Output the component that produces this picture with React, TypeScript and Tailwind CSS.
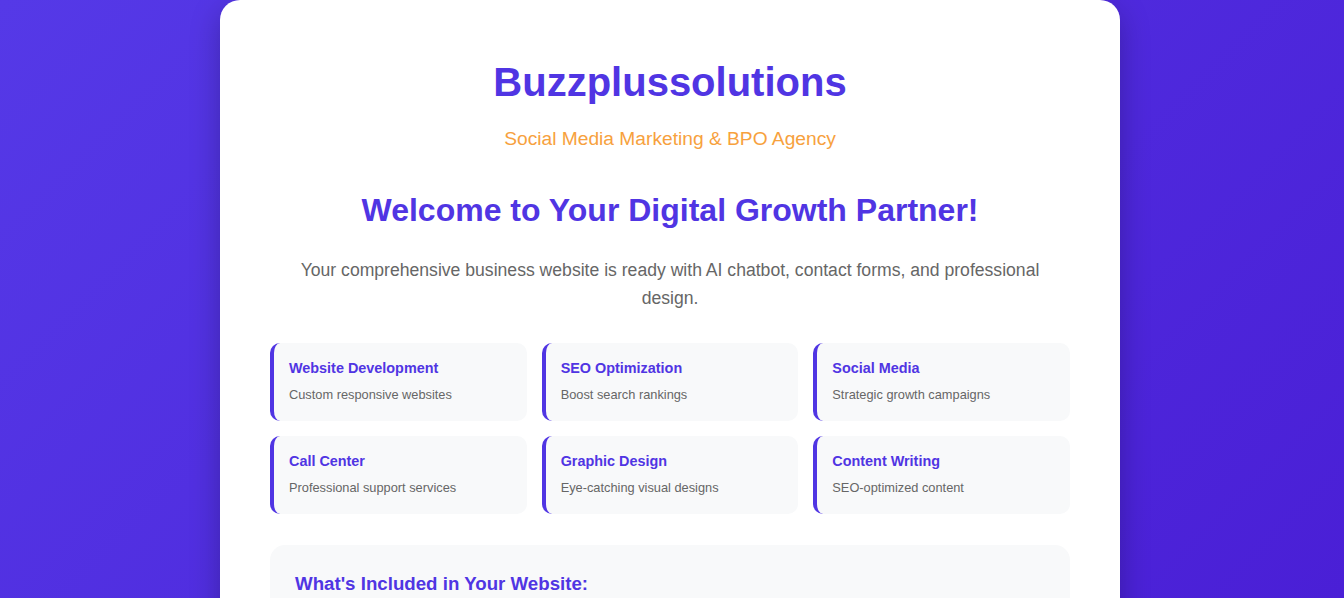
const services = [
    { title: 'Website Development', desc: 'Custom responsive websites' },
    { title: 'SEO Optimization', desc: 'Boost search rankings' },
    { title: 'Social Media', desc: 'Strategic growth campaigns' },
    { title: 'Call Center', desc: 'Professional support services' },
    { title: 'Graphic Design', desc: 'Eye-catching visual designs' },
    { title: 'Content Writing', desc: 'SEO-optimized content' },
]

const App = () => {
    return (
        <div className="min-h-[598px] h-[598px] overflow-hidden bg-[linear-gradient(135deg,#5539e7_0%,#4a1fd6_100%)] font-['Liberation_Sans',Arial,sans-serif]">
            <div className="ml-[220px] w-[900px] bg-white rounded-[20px] shadow-[0_10px_30px_rgba(0,0,0,0.25)] px-[50px] pt-[59px] pb-10 text-center">
                <h1 className="text-[40px] leading-[46px] font-bold text-[#5035e3]">
                    Buzzplussolutions
                </h1>
                <p className="mt-[23px] text-[19.2px] leading-[22px] text-[#f7a13d]">
                    Social Media Marketing &amp; BPO Agency
                </p>
                <h2 className="mt-[42px] text-[32px] leading-[37px] font-bold text-[#5035e3]">
                    Welcome to Your Digital Growth Partner!
                </h2>
                <p className="mt-[27px] mx-auto max-w-[760px] text-[17.6px] leading-[28px] text-[#666]">
                    Your comprehensive business website is ready with AI chatbot, contact forms, and professional design.
                </p>

                <div className="mt-[31px] grid grid-cols-3 gap-[15px] text-left">
                    {
                        services.map((s, i) => (
                            <div key={i} className="bg-[#f8f9fa] rounded-[10px] border-l-4 border-[#5035e3] pl-[15px] pr-4 pt-[17px] h-[78px]">
                                <h3 className="text-[14.4px] leading-[17px] font-bold text-[#5035e3]">{s.title}</h3>
                                <p className="mt-[10px] text-[12.8px] leading-[15px] text-[#666]">{s.desc}</p>
                            </div>
                        ))
                    }
                </div>

                <div className="mt-[31px] bg-[#f8f9fa] rounded-[15px] px-[25px] pt-[28px] pb-6 text-left">
                    <h3 className="text-[18.7px] leading-[22px] font-bold text-[#5035e3]">
                        What's Included in Your Website:
                    </h3>
                </div>
            </div>
        </div>
    )
}

export default App
